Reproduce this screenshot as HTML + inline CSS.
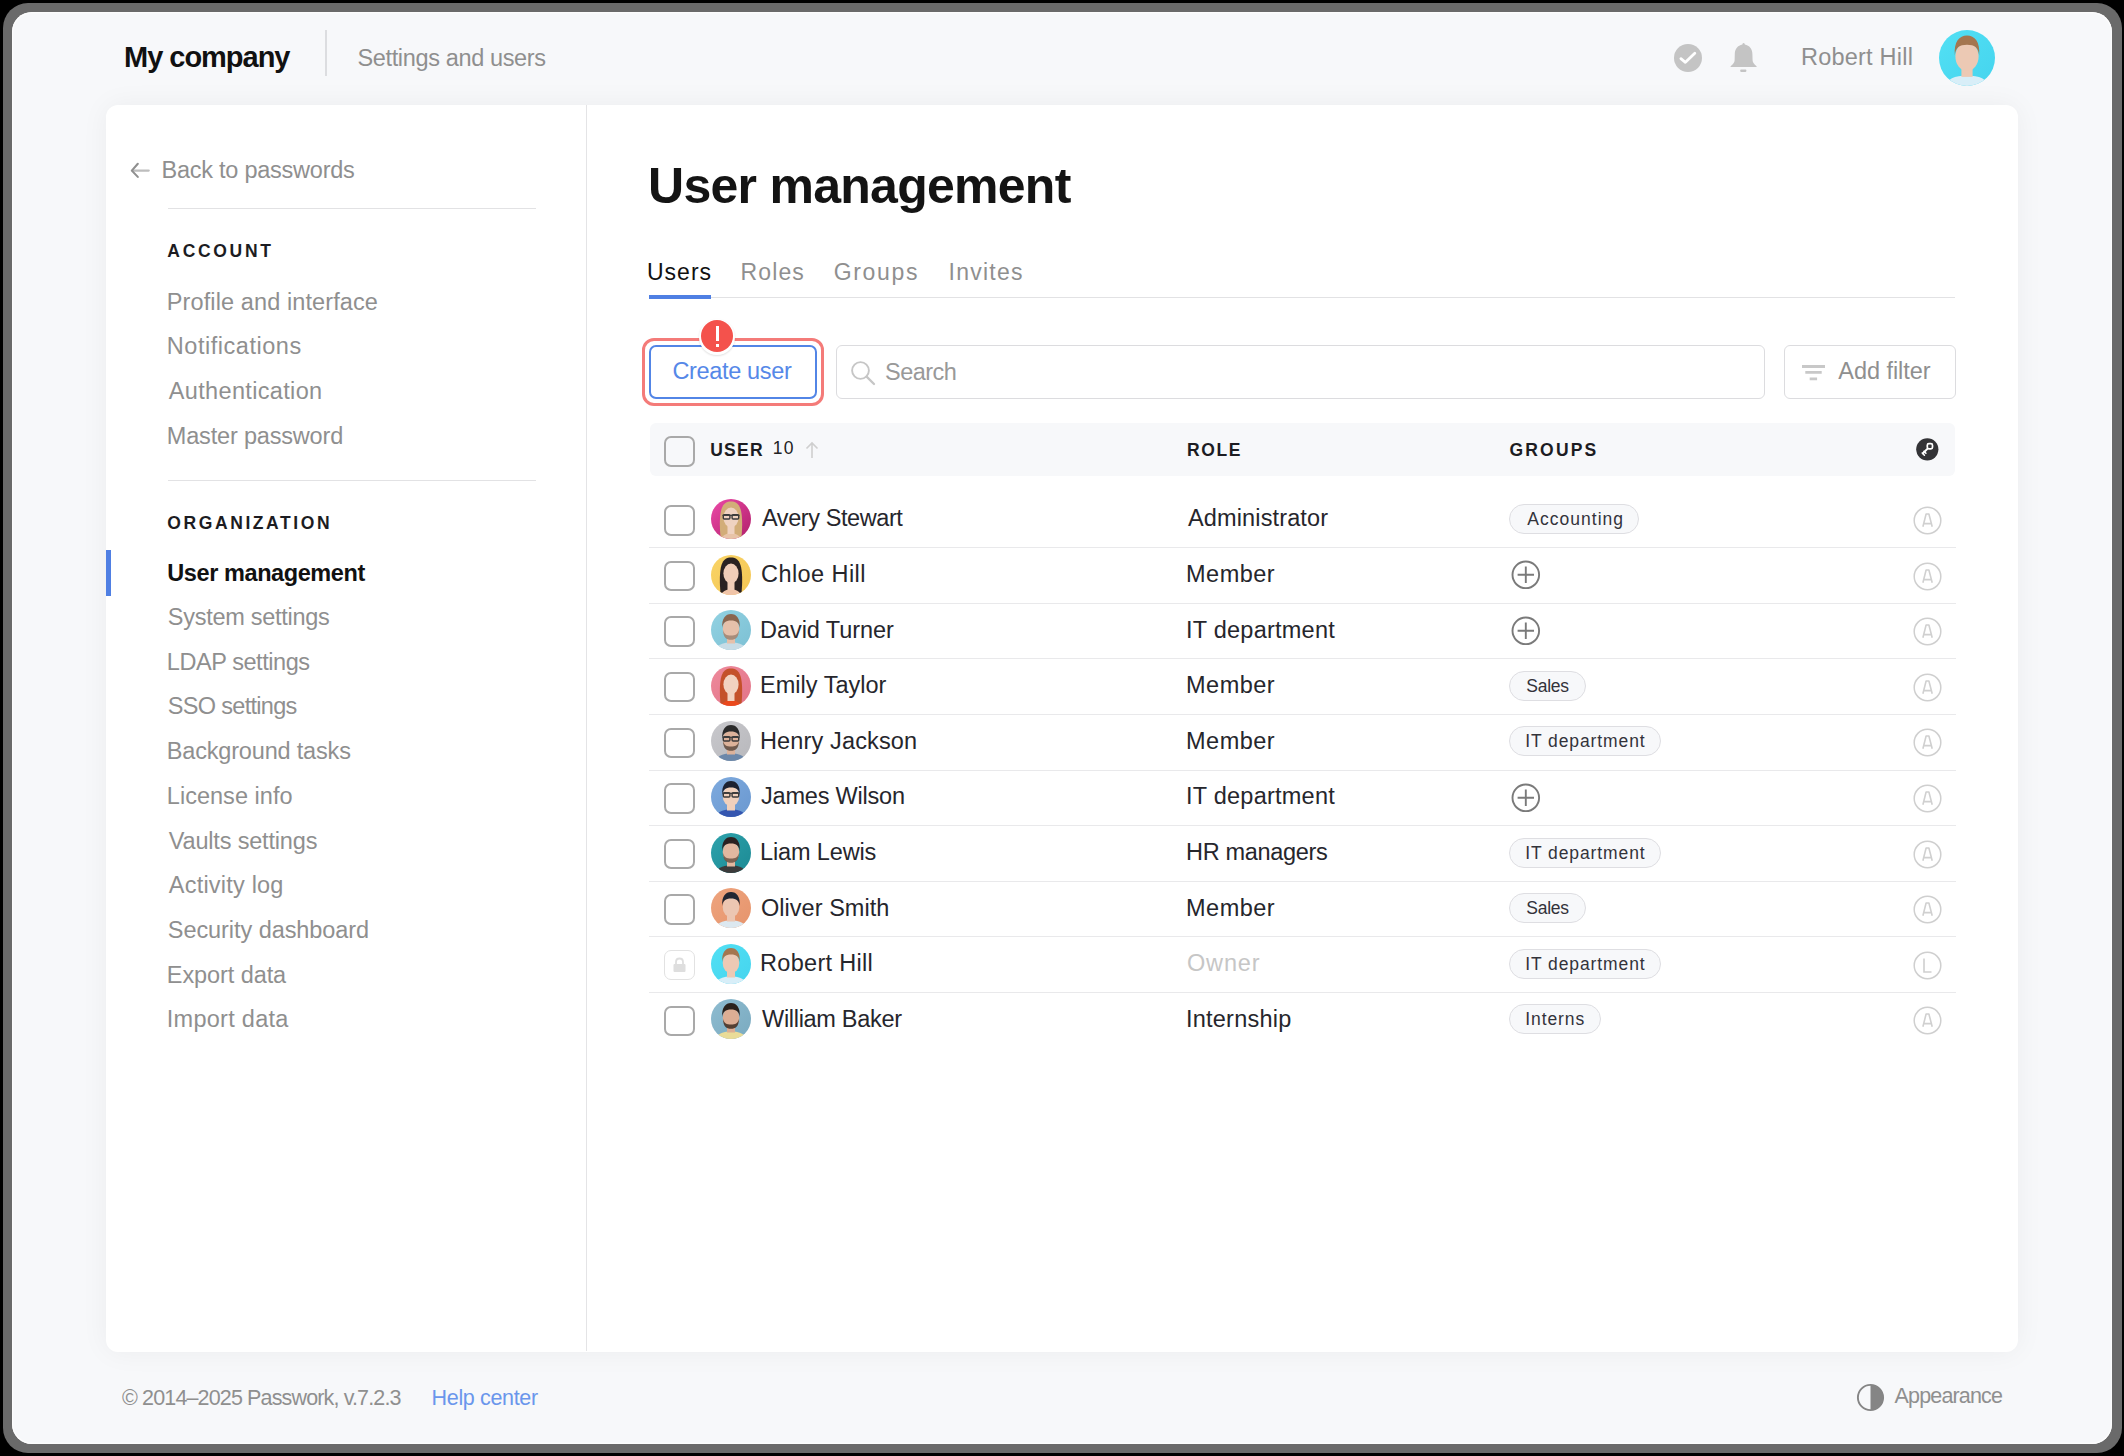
<!DOCTYPE html>
<html><head><meta charset="utf-8"><title>User management</title>
<style>
html,body{margin:0;padding:0;width:2124px;height:1456px;overflow:hidden;background:#000;}
body{position:relative;font-family:"Liberation Sans",sans-serif;}
.t{position:absolute;white-space:nowrap;line-height:1;}
.box{position:absolute;}
.abs{position:absolute;overflow:visible;}
.frame{position:absolute;left:2.5px;top:2.5px;right:2.5px;bottom:3px;background:#6a6a6a;border-radius:25px;}
.app{position:absolute;left:12px;top:12px;width:2100px;height:1431.5px;background:#f7f8fa;border-radius:20px;box-shadow:inset 0 0 0 1.2px #fdfdfd;}
.card{position:absolute;left:105.5px;top:104.5px;width:1912.5px;height:1247px;background:#fff;border-radius:12px;box-shadow:0 0 28px rgba(20,20,30,0.05);}
.chip{position:absolute;height:30px;box-sizing:border-box;border:1.5px solid #dedee2;border-radius:15px;background:#f7f8fa;}
</style></head>
<body>
<div class="frame"></div><div class="app"></div>
<div class="t" style="left:124.00px;top:43.15px;font-size:29px;font-weight:700;color:#111;letter-spacing:-1.022px;">My company</div>
<div class="box" style="left:325px;top:30px;width:1.5px;height:46px;background:#dcdde0"></div>
<div class="t" style="left:357.50px;top:46.71px;font-size:23.5px;font-weight:400;color:#8f8f8f;letter-spacing:-0.359px;">Settings and users</div>
<svg class="abs" style="left:1674px;top:44px" width="28" height="28" viewBox="0 0 28 28">
<circle cx="14" cy="14" r="14" fill="#c4c4c4"/><path d="M6.9 14.7 L11.4 18.3 L20.8 9.3" stroke="#fff" stroke-width="2.8" fill="none" stroke-linecap="round" stroke-linejoin="round"/></svg>
<svg class="abs" style="left:1730px;top:42px" width="28" height="32" viewBox="0 0 28 32">
<path d="M13.6 1 C14.5 1 14.8 1.8 14.8 2.6 C19.5 3.5 22.3 7 22.4 12 L22.6 18.5 C22.8 20.5 24 22 26.6 24.2 L26.6 25 L0.6 25 L0.6 24.2 C3.2 22 4.4 20.5 4.6 18.5 L4.8 12 C4.9 7 7.7 3.5 12.4 2.6 C12.4 1.8 12.7 1 13.6 1 Z" fill="#c4c4c4"/>
<rect x="10.2" y="27.6" width="6.2" height="2.3" rx="0.8" fill="#c4c4c4"/></svg>
<div class="t" style="left:1801.00px;top:46.41px;font-size:23.5px;font-weight:400;color:#8f8f8f;letter-spacing:0.22px;">Robert Hill</div>
<svg class="abs" style="left:1939.0px;top:30.0px" width="56" height="56" viewBox="0 0 40 40"><defs><clipPath id="c1967_58"><circle cx="20" cy="20" r="20"/></clipPath><linearGradient id="gc1967_58" x1="0" y1="0" x2="1" y2="1"><stop offset="0" stop-color="#52e0f4"/><stop offset="1" stop-color="#45d4ee"/></linearGradient><filter id="fc1967_58" x="-10%" y="-10%" width="120%" height="120%"><feGaussianBlur stdDeviation="0.45"/></filter></defs><g clip-path="url(#c1967_58)"><rect width="40" height="40" fill="url(#gc1967_58)"/><g filter="url(#fc1967_58)"><path d="M4 42 C5 35 11 32.5 20 32.5 C29 32.5 35 35 36 42 Z" fill="#d8eef8"/><rect x="16" y="25" width="8" height="8.5" fill="#ecc9b4"/><ellipse cx="20" cy="19" rx="8.3" ry="10.3" fill="#ecc9b4"/><path d="M11.3 18 C10.5 8.5 14.5 4 20 4 C25.5 4 29.5 8.5 28.7 18 C28 12.5 25.5 10.5 20 10.5 C14.5 10.5 12 12.5 11.3 18 Z" fill="#a47650"/></g></g></svg>
<div class="card"></div>
<div class="box" style="left:586px;top:105px;width:1.3px;height:1246px;background:#e4e4e6"></div>
<svg class="abs" style="left:129px;top:161px" width="22" height="20" viewBox="0 0 22 20"><path d="M3.6 9.6 H19.7" stroke="#bdbdbd" stroke-width="2.3" stroke-linecap="round"/><path d="M8.8 2.8 L2.8 9.6 L8.8 15.9" stroke="#8f8f8f" stroke-width="2.1" fill="none" stroke-linecap="round" stroke-linejoin="round"/></svg>
<div class="t" style="left:161.50px;top:159.21px;font-size:23.5px;font-weight:400;color:#8f8f8f;letter-spacing:-0.244px;">Back to passwords</div>
<div class="box" style="left:168px;top:207.5px;width:368px;height:1.5px;background:#e2e2e4"></div>
<div class="t" style="left:167.30px;top:242.99px;font-size:17.5px;font-weight:700;color:#1c1c22;letter-spacing:2.7px;">ACCOUNT</div>
<div class="t" style="left:166.80px;top:290.51px;font-size:23.5px;font-weight:400;color:#8f8f8f;letter-spacing:0.105px;">Profile and interface</div>
<div class="t" style="left:166.80px;top:335.01px;font-size:23.5px;font-weight:400;color:#8f8f8f;letter-spacing:0.533px;">Notifications</div>
<div class="t" style="left:168.80px;top:379.71px;font-size:23.5px;font-weight:400;color:#8f8f8f;letter-spacing:0.338px;">Authentication</div>
<div class="t" style="left:166.80px;top:424.61px;font-size:23.5px;font-weight:400;color:#8f8f8f;letter-spacing:-0.179px;">Master password</div>
<div class="box" style="left:168px;top:479.5px;width:368px;height:1.5px;background:#e2e2e4"></div>
<div class="t" style="left:167.30px;top:514.59px;font-size:17.5px;font-weight:700;color:#1c1c22;letter-spacing:2.591px;">ORGANIZATION</div>
<div class="box" style="left:106px;top:550px;width:4.5px;height:46px;background:#4f7fe3"></div>
<div class="t" style="left:167.30px;top:562.01px;font-size:23.5px;font-weight:700;color:#111;letter-spacing:-0.414px;">User management</div>
<div class="t" style="left:167.80px;top:606.01px;font-size:23.5px;font-weight:400;color:#8f8f8f;letter-spacing:-0.271px;">System settings</div>
<div class="t" style="left:166.80px;top:650.73px;font-size:23.5px;font-weight:400;color:#8f8f8f;letter-spacing:-0.433px;">LDAP settings</div>
<div class="t" style="left:167.80px;top:695.45px;font-size:23.5px;font-weight:400;color:#8f8f8f;letter-spacing:-0.691px;">SSO settings</div>
<div class="t" style="left:166.80px;top:740.17px;font-size:23.5px;font-weight:400;color:#8f8f8f;letter-spacing:-0.18px;">Background tasks</div>
<div class="t" style="left:166.80px;top:784.89px;font-size:23.5px;font-weight:400;color:#8f8f8f;letter-spacing:0.027px;">License info</div>
<div class="t" style="left:168.80px;top:829.61px;font-size:23.5px;font-weight:400;color:#8f8f8f;letter-spacing:-0.179px;">Vaults settings</div>
<div class="t" style="left:168.80px;top:874.33px;font-size:23.5px;font-weight:400;color:#8f8f8f;letter-spacing:0.209px;">Activity log</div>
<div class="t" style="left:167.80px;top:919.05px;font-size:23.5px;font-weight:400;color:#8f8f8f;letter-spacing:-0.065px;">Security dashboard</div>
<div class="t" style="left:166.80px;top:963.77px;font-size:23.5px;font-weight:400;color:#8f8f8f;letter-spacing:-0.08px;">Export data</div>
<div class="t" style="left:166.80px;top:1008.49px;font-size:23.5px;font-weight:400;color:#8f8f8f;letter-spacing:0.27px;">Import data</div>
<div class="t" style="left:648.00px;top:161.38px;font-size:50px;font-weight:700;color:#141414;letter-spacing:-0.729px;">User management</div>
<div class="t" style="left:647.00px;top:260.93px;font-size:23px;font-weight:400;color:#111;letter-spacing:1.0px;">Users</div>
<div class="t" style="left:740.60px;top:260.93px;font-size:23px;font-weight:400;color:#8f8f8f;letter-spacing:1.1px;">Roles</div>
<div class="t" style="left:833.70px;top:260.93px;font-size:23px;font-weight:400;color:#8f8f8f;letter-spacing:1.66px;">Groups</div>
<div class="t" style="left:948.50px;top:260.93px;font-size:23px;font-weight:400;color:#8f8f8f;letter-spacing:1.25px;">Invites</div>
<div class="box" style="left:649px;top:296.5px;width:1306px;height:1.5px;background:#e2e2e4"></div>
<div class="box" style="left:649px;top:295px;width:61.5px;height:3.5px;background:#4f7fe3"></div>
<div class="box" style="left:642.2px;top:338px;width:181.6px;height:67.7px;border:3.2px solid #f47b79;border-radius:12px;box-sizing:border-box"></div>
<div class="box" style="left:649px;top:344.5px;width:168px;height:54px;border:2px solid #5285e6;border-radius:7px;box-sizing:border-box;background:#fff"></div>
<div class="t" style="left:672.50px;top:359.71px;font-size:23.5px;font-weight:400;color:#5688e8;letter-spacing:-0.35px;">Create user</div>
<div class="box" style="left:699px;top:318.5px;width:36px;height:36px;border-radius:50%;background:#fff;box-shadow:0 1px 2px rgba(0,0,0,0.12)"></div>
<div class="box" style="left:700.8px;top:320.1px;width:32.4px;height:32.4px;border-radius:50%;background:#f4524c"></div>
<div class="box" style="left:715.5px;top:325.7px;width:3.5px;height:15px;background:#fff"></div>
<div class="box" style="left:715.5px;top:343.7px;width:3.5px;height:3.4px;background:#fff"></div>
<div class="box" style="left:835.5px;top:345px;width:929px;height:53.5px;border:1.5px solid #dcdcdf;border-radius:6px;box-sizing:border-box"></div>
<svg class="abs" style="left:849px;top:359px" width="28" height="28" viewBox="0 0 28 28"><circle cx="11.5" cy="11.5" r="8.4" stroke="#c6c6c6" stroke-width="1.9" fill="none"/><path d="M17.6 17.6 L25 25" stroke="#c6c6c6" stroke-width="2.3" stroke-linecap="round"/></svg>
<div class="t" style="left:885.10px;top:361.31px;font-size:23.5px;font-weight:400;color:#999;letter-spacing:-0.56px;">Search</div>
<div class="box" style="left:1784px;top:345px;width:171.5px;height:53.5px;border:1.5px solid #dcdcdf;border-radius:6px;box-sizing:border-box"></div>
<svg class="abs" style="left:1800px;top:362px" width="28" height="20" viewBox="0 0 28 20"><path d="M2 4.5 H25 M5.3 10.4 H21.7 M9.7 16.8 H17.1" stroke="#c8c8c8" stroke-width="2.8"/></svg>
<div class="t" style="left:1838.30px;top:359.81px;font-size:23.5px;font-weight:400;color:#8f8f8f;letter-spacing:-0.056px;">Add filter</div>
<div class="box" style="left:650px;top:423px;width:1305px;height:52.5px;background:#f7f8fa;border-radius:6px"></div>
<div class="box" style="left:664.2px;top:436.00px;width:30.5px;height:30.5px;border:2px solid #a9a9a9;border-radius:7px;box-sizing:border-box"></div>
<div class="t" style="left:710.20px;top:441.99px;font-size:17.5px;font-weight:700;color:#1c1c22;letter-spacing:1.267px;">USER</div>
<div class="t" style="left:772.80px;top:440.29px;font-size:17.5px;font-weight:400;color:#222;letter-spacing:1.2px;">10</div>
<svg class="abs" style="left:804px;top:441px" width="16" height="18" viewBox="0 0 16 18"><path d="M8 17 V2 M2.5 7.5 L8 2 L13.5 7.5" stroke="#cfcfcf" stroke-width="1.6" fill="none"/></svg>
<div class="t" style="left:1186.90px;top:441.99px;font-size:17.5px;font-weight:700;color:#1c1c22;letter-spacing:1.633px;">ROLE</div>
<div class="t" style="left:1509.60px;top:441.89px;font-size:17.5px;font-weight:700;color:#1c1c22;letter-spacing:2.14px;">GROUPS</div>
<svg class="abs" style="left:1916.2px;top:438.2px" width="23" height="23" viewBox="0 0 23 23"><circle cx="11.3" cy="11.3" r="11.1" fill="#333336"/><rect x="11.3" y="5.6" width="5.2" height="5.2" rx="1.6" stroke="#fff" stroke-width="1.7" fill="none"/><path d="M11.6 10.6 L7 15.2" stroke="#fff" stroke-width="2" stroke-linecap="round"/><path d="M6.2 15 L8.4 17.2 M8 13.4 L9.9 15.3" stroke="#fff" stroke-width="1.6" stroke-linecap="round"/></svg>
<div class="box" style="left:664.2px;top:505.10px;width:30.5px;height:30.5px;border:2px solid #a9a9a9;border-radius:7px;box-sizing:border-box"></div>
<svg class="abs" style="left:710.5px;top:499.0px" width="40" height="40" viewBox="0 0 40 40"><defs><clipPath id="c730_519"><circle cx="20" cy="20" r="20"/></clipPath><linearGradient id="gc730_519" x1="0" y1="0" x2="1" y2="1"><stop offset="0" stop-color="#ec4aa8"/><stop offset="1" stop-color="#b01f6a"/></linearGradient><filter id="fc730_519" x="-10%" y="-10%" width="120%" height="120%"><feGaussianBlur stdDeviation="0.45"/></filter></defs><g clip-path="url(#c730_519)"><rect width="40" height="40" fill="url(#gc730_519)"/><g filter="url(#fc730_519)"><path d="M9.5 38 C8.5 28 8.5 16 10.5 10 C12.5 4 16 2.5 20 2.5 C24 2.5 27.5 4 29.5 10 C31.5 16 31.5 28 30.5 38 Z" fill="#d2ad78"/><path d="M9 42 C11 36 15 34.5 20 34.5 C25 34.5 29 36 31 42 Z" fill="#e8c4a8"/><rect x="16.5" y="25" width="7" height="10" fill="#efd2c0"/><ellipse cx="20" cy="18.5" rx="7.6" ry="10" fill="#efd2c0"/><path d="M12.4 14 C13 7 16 5 20 5 C24 5 27 7 27.6 14 C26 9.5 23 8 20 8 C17 8 14 9.5 12.4 14 Z" fill="#d2ad78"/><path d="M11.5 16.3 H28.5" stroke="#3a3a3a" stroke-width="1.2"/><rect x="12.3" y="15.8" width="6.6" height="4.2" rx="1" fill="none" stroke="#3a3a3a" stroke-width="1.4"/><rect x="21.1" y="15.8" width="6.6" height="4.2" rx="1" fill="none" stroke="#3a3a3a" stroke-width="1.4"/></g></g></svg>
<div class="t" style="left:762.00px;top:507.41px;font-size:23.5px;font-weight:400;color:#26262c;letter-spacing:-0.417px;">Avery Stewart</div>
<div class="t" style="left:1188.00px;top:507.41px;font-size:23.5px;font-weight:400;color:#26262c;letter-spacing:0.133px;">Administrator</div>
<div class="chip" style="left:1509.3px;top:504.00px;width:130.2px"></div>
<div class="t" style="left:1527.30px;top:511.09px;font-size:17.5px;font-weight:400;color:#33333a;letter-spacing:1.022px;">Accounting</div>
<svg class="abs" style="left:1912.5px;top:506.00px" width="29" height="29" viewBox="0 0 29 29"><circle cx="14.5" cy="14.5" r="13.3" stroke="#cfcfcf" stroke-width="1.5" fill="none"/><path d="M9.9 20.8 L13.1 8 H15.9 L19.2 20.8 M11.3 17.6 H17.8" stroke="#d0d0d0" stroke-width="1.6" fill="none" stroke-linejoin="round"/></svg>
<div class="box" style="left:649px;top:547px;width:1306.5px;height:1.3px;background:#e9e9eb"></div>
<div class="box" style="left:664.2px;top:560.70px;width:30.5px;height:30.5px;border:2px solid #a9a9a9;border-radius:7px;box-sizing:border-box"></div>
<svg class="abs" style="left:710.5px;top:554.6px" width="40" height="40" viewBox="0 0 40 40"><defs><clipPath id="c730_574"><circle cx="20" cy="20" r="20"/></clipPath><linearGradient id="gc730_574" x1="0" y1="0" x2="1" y2="1"><stop offset="0" stop-color="#f9d467"/><stop offset="1" stop-color="#f4c654"/></linearGradient><filter id="fc730_574" x="-10%" y="-10%" width="120%" height="120%"><feGaussianBlur stdDeviation="0.45"/></filter></defs><g clip-path="url(#c730_574)"><rect width="40" height="40" fill="url(#gc730_574)"/><g filter="url(#fc730_574)"><path d="M9.5 38 C8.5 28 8.5 16 10.5 10 C12.5 4 16 2.5 20 2.5 C24 2.5 27.5 4 29.5 10 C31.5 16 31.5 28 30.5 38 Z" fill="#2c2222"/><path d="M9 42 C11 36 15 34.5 20 34.5 C25 34.5 29 36 31 42 Z" fill="#f0c4a8"/><rect x="16.5" y="25" width="7" height="10" fill="#f0cdb8"/><ellipse cx="20" cy="18.5" rx="7.6" ry="10" fill="#f0cdb8"/><path d="M12.4 14 C13 7 16 5 20 5 C24 5 27 7 27.6 14 C26 9.5 23 8 20 8 C17 8 14 9.5 12.4 14 Z" fill="#2c2222"/></g></g></svg>
<div class="t" style="left:761.00px;top:563.01px;font-size:23.5px;font-weight:400;color:#26262c;letter-spacing:0.433px;">Chloe Hill</div>
<div class="t" style="left:1186.00px;top:563.01px;font-size:23.5px;font-weight:400;color:#26262c;letter-spacing:0.5px;">Member</div>
<svg class="abs" style="left:1510.5px;top:560.40px" width="30" height="30" viewBox="0 0 30 30"><circle cx="14.8" cy="14.8" r="13.3" stroke="#7a7a7a" stroke-width="1.9" fill="none"/><path d="M6.6 14.8 H23 M14.8 6.6 V23" stroke="#7a7a7a" stroke-width="1.9"/></svg>
<svg class="abs" style="left:1912.5px;top:561.60px" width="29" height="29" viewBox="0 0 29 29"><circle cx="14.5" cy="14.5" r="13.3" stroke="#cfcfcf" stroke-width="1.5" fill="none"/><path d="M9.9 20.8 L13.1 8 H15.9 L19.2 20.8 M11.3 17.6 H17.8" stroke="#d0d0d0" stroke-width="1.6" fill="none" stroke-linejoin="round"/></svg>
<div class="box" style="left:649px;top:603px;width:1306.5px;height:1.3px;background:#e9e9eb"></div>
<div class="box" style="left:664.2px;top:616.30px;width:30.5px;height:30.5px;border:2px solid #a9a9a9;border-radius:7px;box-sizing:border-box"></div>
<svg class="abs" style="left:710.5px;top:610.2px" width="40" height="40" viewBox="0 0 40 40"><defs><clipPath id="c730_630"><circle cx="20" cy="20" r="20"/></clipPath><linearGradient id="gc730_630" x1="0" y1="0" x2="1" y2="1"><stop offset="0" stop-color="#92d2e2"/><stop offset="1" stop-color="#7cc0d4"/></linearGradient><filter id="fc730_630" x="-10%" y="-10%" width="120%" height="120%"><feGaussianBlur stdDeviation="0.45"/></filter></defs><g clip-path="url(#c730_630)"><rect width="40" height="40" fill="url(#gc730_630)"/><g filter="url(#fc730_630)"><path d="M4 42 C5 35 11 32.5 20 32.5 C29 32.5 35 35 36 42 Z" fill="#c8dce6"/><rect x="16" y="25" width="8" height="8.5" fill="#e6c0aa"/><ellipse cx="20" cy="19" rx="8.3" ry="10.3" fill="#e6c0aa"/><path d="M11.3 18 C10.5 8.5 14.5 4 20 4 C25.5 4 29.5 8.5 28.7 18 C28 12.5 25.5 10.5 20 10.5 C14.5 10.5 12 12.5 11.3 18 Z" fill="#8a6650"/><path d="M12 20 C12.3 27.5 15.5 29.8 20 29.8 C24.5 29.8 27.7 27.5 28 20 C26.7 24.5 24.5 25.5 20 25.5 C15.5 25.5 13.3 24.5 12 20 Z" fill="#9c8272" opacity="0.85"/></g></g></svg>
<div class="t" style="left:760.00px;top:618.61px;font-size:23.5px;font-weight:400;color:#26262c;letter-spacing:-0.055px;">David Turner</div>
<div class="t" style="left:1186.00px;top:618.61px;font-size:23.5px;font-weight:400;color:#26262c;letter-spacing:0.242px;">IT department</div>
<svg class="abs" style="left:1510.5px;top:616.00px" width="30" height="30" viewBox="0 0 30 30"><circle cx="14.8" cy="14.8" r="13.3" stroke="#7a7a7a" stroke-width="1.9" fill="none"/><path d="M6.6 14.8 H23 M14.8 6.6 V23" stroke="#7a7a7a" stroke-width="1.9"/></svg>
<svg class="abs" style="left:1912.5px;top:617.20px" width="29" height="29" viewBox="0 0 29 29"><circle cx="14.5" cy="14.5" r="13.3" stroke="#cfcfcf" stroke-width="1.5" fill="none"/><path d="M9.9 20.8 L13.1 8 H15.9 L19.2 20.8 M11.3 17.6 H17.8" stroke="#d0d0d0" stroke-width="1.6" fill="none" stroke-linejoin="round"/></svg>
<div class="box" style="left:649px;top:658px;width:1306.5px;height:1.3px;background:#e9e9eb"></div>
<div class="box" style="left:664.2px;top:671.90px;width:30.5px;height:30.5px;border:2px solid #a9a9a9;border-radius:7px;box-sizing:border-box"></div>
<svg class="abs" style="left:710.5px;top:665.8px" width="40" height="40" viewBox="0 0 40 40"><defs><clipPath id="c730_685"><circle cx="20" cy="20" r="20"/></clipPath><linearGradient id="gc730_685" x1="0" y1="0" x2="1" y2="1"><stop offset="0" stop-color="#ee8a9c"/><stop offset="1" stop-color="#e27488"/></linearGradient><filter id="fc730_685" x="-10%" y="-10%" width="120%" height="120%"><feGaussianBlur stdDeviation="0.45"/></filter></defs><g clip-path="url(#c730_685)"><rect width="40" height="40" fill="url(#gc730_685)"/><g filter="url(#fc730_685)"><path d="M9.5 38 C8.5 28 8.5 16 10.5 10 C12.5 4 16 2.5 20 2.5 C24 2.5 27.5 4 29.5 10 C31.5 16 31.5 28 30.5 38 Z" fill="#c4512c"/><path d="M9 42 C11 36 15 34.5 20 34.5 C25 34.5 29 36 31 42 Z" fill="#ea4a1e"/><rect x="16.5" y="25" width="7" height="10" fill="#f2d2c0"/><ellipse cx="20" cy="18.5" rx="7.6" ry="10" fill="#f2d2c0"/><path d="M12.4 14 C13 7 16 5 20 5 C24 5 27 7 27.6 14 C26 9.5 23 8 20 8 C17 8 14 9.5 12.4 14 Z" fill="#c4512c"/></g></g></svg>
<div class="t" style="left:760.00px;top:674.21px;font-size:23.5px;font-weight:400;color:#26262c;letter-spacing:0.018px;">Emily Taylor</div>
<div class="t" style="left:1186.00px;top:674.21px;font-size:23.5px;font-weight:400;color:#26262c;letter-spacing:0.5px;">Member</div>
<div class="chip" style="left:1509.3px;top:670.80px;width:76.3px"></div>
<div class="t" style="left:1526.30px;top:677.89px;font-size:17.5px;font-weight:400;color:#33333a;letter-spacing:-0.275px;">Sales</div>
<svg class="abs" style="left:1912.5px;top:672.80px" width="29" height="29" viewBox="0 0 29 29"><circle cx="14.5" cy="14.5" r="13.3" stroke="#cfcfcf" stroke-width="1.5" fill="none"/><path d="M9.9 20.8 L13.1 8 H15.9 L19.2 20.8 M11.3 17.6 H17.8" stroke="#d0d0d0" stroke-width="1.6" fill="none" stroke-linejoin="round"/></svg>
<div class="box" style="left:649px;top:714px;width:1306.5px;height:1.3px;background:#e9e9eb"></div>
<div class="box" style="left:664.2px;top:727.50px;width:30.5px;height:30.5px;border:2px solid #a9a9a9;border-radius:7px;box-sizing:border-box"></div>
<svg class="abs" style="left:710.5px;top:721.4px" width="40" height="40" viewBox="0 0 40 40"><defs><clipPath id="c730_741"><circle cx="20" cy="20" r="20"/></clipPath><linearGradient id="gc730_741" x1="0" y1="0" x2="1" y2="1"><stop offset="0" stop-color="#c8c8cc"/><stop offset="1" stop-color="#b8b8bc"/></linearGradient><filter id="fc730_741" x="-10%" y="-10%" width="120%" height="120%"><feGaussianBlur stdDeviation="0.45"/></filter></defs><g clip-path="url(#c730_741)"><rect width="40" height="40" fill="url(#gc730_741)"/><g filter="url(#fc730_741)"><path d="M4 42 C5 35 11 32.5 20 32.5 C29 32.5 35 35 36 42 Z" fill="#6c88aa"/><rect x="16" y="25" width="8" height="8.5" fill="#dcb29a"/><ellipse cx="20" cy="19" rx="8.3" ry="10.3" fill="#dcb29a"/><path d="M11.3 18 C10.5 8.5 14.5 4 20 4 C25.5 4 29.5 8.5 28.7 18 C28 12.5 25.5 10.5 20 10.5 C14.5 10.5 12 12.5 11.3 18 Z" fill="#2c2c2c"/><path d="M12 20 C12.3 27.5 15.5 29.8 20 29.8 C24.5 29.8 27.7 27.5 28 20 C26.7 24.5 24.5 25.5 20 25.5 C15.5 25.5 13.3 24.5 12 20 Z" fill="#5c4a40" opacity="0.85"/><path d="M11.5 16.3 H28.5" stroke="#3a3a3a" stroke-width="1.2"/><rect x="12.3" y="15.8" width="6.6" height="4.2" rx="1" fill="none" stroke="#3a3a3a" stroke-width="1.4"/><rect x="21.1" y="15.8" width="6.6" height="4.2" rx="1" fill="none" stroke="#3a3a3a" stroke-width="1.4"/></g></g></svg>
<div class="t" style="left:760.00px;top:729.81px;font-size:23.5px;font-weight:400;color:#26262c;letter-spacing:0.142px;">Henry Jackson</div>
<div class="t" style="left:1186.00px;top:729.81px;font-size:23.5px;font-weight:400;color:#26262c;letter-spacing:0.5px;">Member</div>
<div class="chip" style="left:1509.3px;top:726.40px;width:152.1px"></div>
<div class="t" style="left:1525.30px;top:733.49px;font-size:17.5px;font-weight:400;color:#33333a;letter-spacing:0.892px;">IT department</div>
<svg class="abs" style="left:1912.5px;top:728.40px" width="29" height="29" viewBox="0 0 29 29"><circle cx="14.5" cy="14.5" r="13.3" stroke="#cfcfcf" stroke-width="1.5" fill="none"/><path d="M9.9 20.8 L13.1 8 H15.9 L19.2 20.8 M11.3 17.6 H17.8" stroke="#d0d0d0" stroke-width="1.6" fill="none" stroke-linejoin="round"/></svg>
<div class="box" style="left:649px;top:770px;width:1306.5px;height:1.3px;background:#e9e9eb"></div>
<div class="box" style="left:664.2px;top:783.10px;width:30.5px;height:30.5px;border:2px solid #a9a9a9;border-radius:7px;box-sizing:border-box"></div>
<svg class="abs" style="left:710.5px;top:777.0px" width="40" height="40" viewBox="0 0 40 40"><defs><clipPath id="c730_797"><circle cx="20" cy="20" r="20"/></clipPath><linearGradient id="gc730_797" x1="0" y1="0" x2="1" y2="1"><stop offset="0" stop-color="#7eaade"/><stop offset="1" stop-color="#6a98d0"/></linearGradient><filter id="fc730_797" x="-10%" y="-10%" width="120%" height="120%"><feGaussianBlur stdDeviation="0.45"/></filter></defs><g clip-path="url(#c730_797)"><rect width="40" height="40" fill="url(#gc730_797)"/><g filter="url(#fc730_797)"><path d="M4 42 C5 35 11 32.5 20 32.5 C29 32.5 35 35 36 42 Z" fill="#3456b0"/><rect x="16" y="25" width="8" height="8.5" fill="#f0d0bc"/><ellipse cx="20" cy="19" rx="8.3" ry="10.3" fill="#f0d0bc"/><path d="M11.3 18 C10.5 8.5 14.5 4 20 4 C25.5 4 29.5 8.5 28.7 18 C28 12.5 25.5 10.5 20 10.5 C14.5 10.5 12 12.5 11.3 18 Z" fill="#1e2430"/><path d="M11.5 16.3 H28.5" stroke="#3a3a3a" stroke-width="1.2"/><rect x="12.3" y="15.8" width="6.6" height="4.2" rx="1" fill="none" stroke="#3a3a3a" stroke-width="1.4"/><rect x="21.1" y="15.8" width="6.6" height="4.2" rx="1" fill="none" stroke="#3a3a3a" stroke-width="1.4"/></g></g></svg>
<div class="t" style="left:761.00px;top:785.41px;font-size:23.5px;font-weight:400;color:#26262c;letter-spacing:-0.205px;">James Wilson</div>
<div class="t" style="left:1186.00px;top:785.41px;font-size:23.5px;font-weight:400;color:#26262c;letter-spacing:0.242px;">IT department</div>
<svg class="abs" style="left:1510.5px;top:782.80px" width="30" height="30" viewBox="0 0 30 30"><circle cx="14.8" cy="14.8" r="13.3" stroke="#7a7a7a" stroke-width="1.9" fill="none"/><path d="M6.6 14.8 H23 M14.8 6.6 V23" stroke="#7a7a7a" stroke-width="1.9"/></svg>
<svg class="abs" style="left:1912.5px;top:784.00px" width="29" height="29" viewBox="0 0 29 29"><circle cx="14.5" cy="14.5" r="13.3" stroke="#cfcfcf" stroke-width="1.5" fill="none"/><path d="M9.9 20.8 L13.1 8 H15.9 L19.2 20.8 M11.3 17.6 H17.8" stroke="#d0d0d0" stroke-width="1.6" fill="none" stroke-linejoin="round"/></svg>
<div class="box" style="left:649px;top:825px;width:1306.5px;height:1.3px;background:#e9e9eb"></div>
<div class="box" style="left:664.2px;top:838.70px;width:30.5px;height:30.5px;border:2px solid #a9a9a9;border-radius:7px;box-sizing:border-box"></div>
<svg class="abs" style="left:710.5px;top:832.6px" width="40" height="40" viewBox="0 0 40 40"><defs><clipPath id="c730_852"><circle cx="20" cy="20" r="20"/></clipPath><linearGradient id="gc730_852" x1="0" y1="0" x2="1" y2="1"><stop offset="0" stop-color="#2ea2ac"/><stop offset="1" stop-color="#1c8a94"/></linearGradient><filter id="fc730_852" x="-10%" y="-10%" width="120%" height="120%"><feGaussianBlur stdDeviation="0.45"/></filter></defs><g clip-path="url(#c730_852)"><rect width="40" height="40" fill="url(#gc730_852)"/><g filter="url(#fc730_852)"><path d="M4 42 C5 35 11 32.5 20 32.5 C29 32.5 35 35 36 42 Z" fill="#3a3a3a"/><rect x="16" y="25" width="8" height="8.5" fill="#e2b8a0"/><ellipse cx="20" cy="19" rx="8.3" ry="10.3" fill="#e2b8a0"/><path d="M11.3 18 C10.5 8.5 14.5 4 20 4 C25.5 4 29.5 8.5 28.7 18 C28 12.5 25.5 10.5 20 10.5 C14.5 10.5 12 12.5 11.3 18 Z" fill="#2c2422"/><path d="M12 20 C12.3 27.5 15.5 29.8 20 29.8 C24.5 29.8 27.7 27.5 28 20 C26.7 24.5 24.5 25.5 20 25.5 C15.5 25.5 13.3 24.5 12 20 Z" fill="#6c5444" opacity="0.85"/></g></g></svg>
<div class="t" style="left:760.00px;top:841.01px;font-size:23.5px;font-weight:400;color:#26262c;letter-spacing:-0.133px;">Liam Lewis</div>
<div class="t" style="left:1186.00px;top:841.01px;font-size:23.5px;font-weight:400;color:#26262c;letter-spacing:-0.33px;">HR managers</div>
<div class="chip" style="left:1509.3px;top:837.60px;width:152.1px"></div>
<div class="t" style="left:1525.30px;top:844.69px;font-size:17.5px;font-weight:400;color:#33333a;letter-spacing:0.892px;">IT department</div>
<svg class="abs" style="left:1912.5px;top:839.60px" width="29" height="29" viewBox="0 0 29 29"><circle cx="14.5" cy="14.5" r="13.3" stroke="#cfcfcf" stroke-width="1.5" fill="none"/><path d="M9.9 20.8 L13.1 8 H15.9 L19.2 20.8 M11.3 17.6 H17.8" stroke="#d0d0d0" stroke-width="1.6" fill="none" stroke-linejoin="round"/></svg>
<div class="box" style="left:649px;top:881px;width:1306.5px;height:1.3px;background:#e9e9eb"></div>
<div class="box" style="left:664.2px;top:894.30px;width:30.5px;height:30.5px;border:2px solid #a9a9a9;border-radius:7px;box-sizing:border-box"></div>
<svg class="abs" style="left:710.5px;top:888.2px" width="40" height="40" viewBox="0 0 40 40"><defs><clipPath id="c730_908"><circle cx="20" cy="20" r="20"/></clipPath><linearGradient id="gc730_908" x1="0" y1="0" x2="1" y2="1"><stop offset="0" stop-color="#eea47e"/><stop offset="1" stop-color="#e6946c"/></linearGradient><filter id="fc730_908" x="-10%" y="-10%" width="120%" height="120%"><feGaussianBlur stdDeviation="0.45"/></filter></defs><g clip-path="url(#c730_908)"><rect width="40" height="40" fill="url(#gc730_908)"/><g filter="url(#fc730_908)"><path d="M4 42 C5 35 11 32.5 20 32.5 C29 32.5 35 35 36 42 Z" fill="#dce8f0"/><rect x="16" y="25" width="8" height="8.5" fill="#ecc6b2"/><ellipse cx="20" cy="19" rx="8.3" ry="10.3" fill="#ecc6b2"/><path d="M11.3 18 C10.5 8.5 14.5 4 20 4 C25.5 4 29.5 8.5 28.7 18 C28 12.5 25.5 10.5 20 10.5 C14.5 10.5 12 12.5 11.3 18 Z" fill="#202632"/></g></g></svg>
<div class="t" style="left:761.00px;top:896.61px;font-size:23.5px;font-weight:400;color:#26262c;letter-spacing:0.036px;">Oliver Smith</div>
<div class="t" style="left:1186.00px;top:896.61px;font-size:23.5px;font-weight:400;color:#26262c;letter-spacing:0.5px;">Member</div>
<div class="chip" style="left:1509.3px;top:893.20px;width:76.3px"></div>
<div class="t" style="left:1526.30px;top:900.29px;font-size:17.5px;font-weight:400;color:#33333a;letter-spacing:-0.275px;">Sales</div>
<svg class="abs" style="left:1912.5px;top:895.20px" width="29" height="29" viewBox="0 0 29 29"><circle cx="14.5" cy="14.5" r="13.3" stroke="#cfcfcf" stroke-width="1.5" fill="none"/><path d="M9.9 20.8 L13.1 8 H15.9 L19.2 20.8 M11.3 17.6 H17.8" stroke="#d0d0d0" stroke-width="1.6" fill="none" stroke-linejoin="round"/></svg>
<div class="box" style="left:649px;top:936px;width:1306.5px;height:1.3px;background:#e9e9eb"></div>
<div class="box" style="left:664.2px;top:949.90px;width:30.5px;height:30.5px;border:1.8px solid #e2e2e2;border-radius:7px;box-sizing:border-box"></div><svg class="abs" style="left:672.2px;top:956.90px" width="15" height="16" viewBox="0 0 15 16"><path d="M4 7 V5 C4 2.8 5.5 1.5 7.5 1.5 C9.5 1.5 11 2.8 11 5 V7" stroke="#dedede" stroke-width="1.8" fill="none"/><rect x="1.5" y="7" width="12" height="8" rx="1" fill="#dedede"/></svg>
<svg class="abs" style="left:710.5px;top:943.8px" width="40" height="40" viewBox="0 0 40 40"><defs><clipPath id="c730_963"><circle cx="20" cy="20" r="20"/></clipPath><linearGradient id="gc730_963" x1="0" y1="0" x2="1" y2="1"><stop offset="0" stop-color="#52e0f4"/><stop offset="1" stop-color="#45d4ee"/></linearGradient><filter id="fc730_963" x="-10%" y="-10%" width="120%" height="120%"><feGaussianBlur stdDeviation="0.45"/></filter></defs><g clip-path="url(#c730_963)"><rect width="40" height="40" fill="url(#gc730_963)"/><g filter="url(#fc730_963)"><path d="M4 42 C5 35 11 32.5 20 32.5 C29 32.5 35 35 36 42 Z" fill="#d8eef8"/><rect x="16" y="25" width="8" height="8.5" fill="#ecc9b4"/><ellipse cx="20" cy="19" rx="8.3" ry="10.3" fill="#ecc9b4"/><path d="M11.3 18 C10.5 8.5 14.5 4 20 4 C25.5 4 29.5 8.5 28.7 18 C28 12.5 25.5 10.5 20 10.5 C14.5 10.5 12 12.5 11.3 18 Z" fill="#a47650"/></g></g></svg>
<div class="t" style="left:760.00px;top:952.21px;font-size:23.5px;font-weight:400;color:#26262c;letter-spacing:0.31px;">Robert Hill</div>
<div class="t" style="left:1187.00px;top:952.21px;font-size:23.5px;font-weight:400;color:#c6c6c6;letter-spacing:0.825px;">Owner</div>
<div class="chip" style="left:1509.3px;top:948.80px;width:152.1px"></div>
<div class="t" style="left:1525.30px;top:955.89px;font-size:17.5px;font-weight:400;color:#33333a;letter-spacing:0.892px;">IT department</div>
<svg class="abs" style="left:1912.5px;top:950.80px" width="29" height="29" viewBox="0 0 29 29"><circle cx="14.5" cy="14.5" r="13.3" stroke="#cfcfcf" stroke-width="1.5" fill="none"/><path d="M11 7.5 V21 H18.5" stroke="#cfcfcf" stroke-width="1.6" fill="none"/></svg>
<div class="box" style="left:649px;top:992px;width:1306.5px;height:1.3px;background:#e9e9eb"></div>
<div class="box" style="left:664.2px;top:1005.50px;width:30.5px;height:30.5px;border:2px solid #a9a9a9;border-radius:7px;box-sizing:border-box"></div>
<svg class="abs" style="left:710.5px;top:999.4px" width="40" height="40" viewBox="0 0 40 40"><defs><clipPath id="c730_1019"><circle cx="20" cy="20" r="20"/></clipPath><linearGradient id="gc730_1019" x1="0" y1="0" x2="1" y2="1"><stop offset="0" stop-color="#8ebcd0"/><stop offset="1" stop-color="#7aaac0"/></linearGradient><filter id="fc730_1019" x="-10%" y="-10%" width="120%" height="120%"><feGaussianBlur stdDeviation="0.45"/></filter></defs><g clip-path="url(#c730_1019)"><rect width="40" height="40" fill="url(#gc730_1019)"/><g filter="url(#fc730_1019)"><path d="M4 42 C5 35 11 32.5 20 32.5 C29 32.5 35 35 36 42 Z" fill="#eadc98"/><rect x="16" y="25" width="8" height="8.5" fill="#dcae94"/><ellipse cx="20" cy="19" rx="8.3" ry="10.3" fill="#dcae94"/><path d="M11.3 18 C10.5 8.5 14.5 4 20 4 C25.5 4 29.5 8.5 28.7 18 C28 12.5 25.5 10.5 20 10.5 C14.5 10.5 12 12.5 11.3 18 Z" fill="#2c221c"/><path d="M12 20 C12.3 27.5 15.5 29.8 20 29.8 C24.5 29.8 27.7 27.5 28 20 C26.7 24.5 24.5 25.5 20 25.5 C15.5 25.5 13.3 24.5 12 20 Z" fill="#3c2c22" opacity="0.85"/></g></g></svg>
<div class="t" style="left:762.00px;top:1007.81px;font-size:23.5px;font-weight:400;color:#26262c;letter-spacing:-0.3px;">William Baker</div>
<div class="t" style="left:1186.00px;top:1007.81px;font-size:23.5px;font-weight:400;color:#26262c;letter-spacing:0.222px;">Internship</div>
<div class="chip" style="left:1509.3px;top:1004.40px;width:92px"></div>
<div class="t" style="left:1525.30px;top:1011.49px;font-size:17.5px;font-weight:400;color:#33333a;letter-spacing:0.9px;">Interns</div>
<svg class="abs" style="left:1912.5px;top:1006.40px" width="29" height="29" viewBox="0 0 29 29"><circle cx="14.5" cy="14.5" r="13.3" stroke="#cfcfcf" stroke-width="1.5" fill="none"/><path d="M9.9 20.8 L13.1 8 H15.9 L19.2 20.8 M11.3 17.6 H17.8" stroke="#d0d0d0" stroke-width="1.6" fill="none" stroke-linejoin="round"/></svg>
<div class="t" style="left:122.00px;top:1387.50px;font-size:21.5px;font-weight:400;color:#8f8f8f;letter-spacing:-0.857px;">© 2014–2025 Passwork, v.7.2.3</div>
<div class="t" style="left:431.60px;top:1387.50px;font-size:21.5px;font-weight:400;color:#6a96ec;letter-spacing:-0.35px;">Help center</div>
<svg class="abs" style="left:1855.5px;top:1382.8px" width="29" height="29" viewBox="0 0 29 29"><circle cx="14.5" cy="14.5" r="12.6" stroke="#858585" stroke-width="1.9" fill="none"/><path d="M14.5 2 A12.5 12.5 0 0 1 14.5 27 Z" fill="#858585"/></svg>
<div class="t" style="left:1894.60px;top:1385.80px;font-size:21.5px;font-weight:400;color:#8f8f8f;letter-spacing:-0.844px;">Appearance</div>
</body></html>
